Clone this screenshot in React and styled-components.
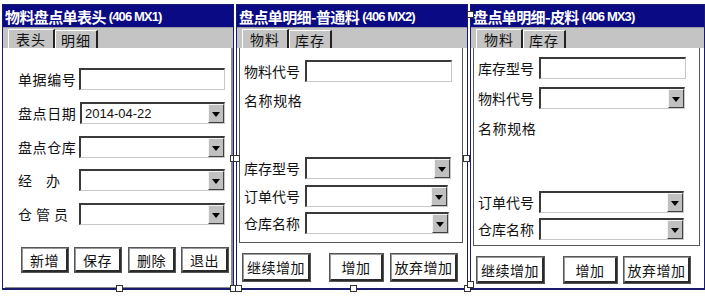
import React from 'react'
import styled, { createGlobalStyle } from 'styled-components'

const Global = createGlobalStyle`
  html, body { margin: 0; padding: 0; background: #fff; }
  body { font-family: "Noto Sans CJK SC", "Liberation Sans", sans-serif; }
`

const Page = styled.div`
  display: flex;
  align-items: flex-start;
  gap: 2px;
  padding: 4px 0 0 2px;
  width: 705px;
  height: 298px;
  box-sizing: border-box;
`

const Window = styled.div`
  position: relative;
  width: ${p => p.$w}px;
  height: 286px;
  box-sizing: border-box;
  display: flex;
  flex-direction: column;
  background: #fff;
  border: 1px solid #1b1b6e;
  border-bottom: 2px solid #1b1b6e;
`

const TitleBar = styled.div`
  height: 22px;
  flex: none;
  background: #0a0a84;
  color: #fff;
  display: flex;
  align-items: center;
  padding-left: 2px;
  white-space: nowrap;
  overflow: hidden;
`

const TitleCn = styled.span`
  font-family: "Noto Sans CJK SC", sans-serif;
  font-weight: 700;
  font-size: 15px;
  letter-spacing: -0.6px;
  line-height: 1;
`

const TitleCode = styled.span`
  font-family: "Liberation Sans", Arial, sans-serif;
  font-weight: 700;
  font-size: 13px;
  letter-spacing: -0.9px;
  margin-left: 3px;
  line-height: 1;
`

const TabStrip = styled.div`
  height: 21px;
  flex: none;
  background: #c4c4c4;
  display: flex;
  align-items: flex-end;
  padding-left: ${p => p.$pl}px;
  border-top: 1px solid #9a9a9a;
  box-sizing: border-box;
`

const Tab = styled.div`
  height: ${p => (p.$active ? 19 : 18)}px;
  width: ${p => p.$w}px;
  box-sizing: border-box;
  display: flex;
  align-items: center;
  justify-content: center;
  font-size: 14px;
  color: #111;
  background: #c4c4c4;
  border-left: 1px solid #fff;
  border-top: 1px solid #fff;
  border-right: 2px solid #222;
  letter-spacing: 1px;
`

const Sheet = styled.div`
  flex: 1;
  background: #fff;
  border-right: 2px solid #8a8a8a;
  border-bottom: 1px solid #8a8a8a;
  margin-left: 2px;
  display: flex;
  flex-direction: column;
  padding: 20px 0 0 13px;
`

const FormBox = styled.div`
  height: ${p => p.$h}px;
  flex: none;
  margin: 0 4px 0 2px;
  border: 1px solid #555;
  border-top: none;
  box-sizing: border-box;
  display: flex;
  flex-direction: column;
  padding: ${p => p.$pt}px 0 0 4px;
`

const Row = styled.div`
  display: flex;
  align-items: center;
  height: 22px;
  margin-top: ${p => p.$mt || 0}px;
`

const Label = styled.div`
  width: ${p => p.$w}px;
  flex: none;
  font-size: 14px;
  letter-spacing: ${p => p.$ls ?? 0.6}px;
  color: #111;
  white-space: pre;
  line-height: 22px;
`

const Field = styled.div`
  width: ${p => p.$w}px;
  height: 22px;
  box-sizing: border-box;
  display: flex;
  align-items: stretch;
  background: #fff;
  border-top: 2px solid #3a3a3a;
  border-left: 2px solid #3a3a3a;
  border-right: 1px solid #c8c8c8;
  border-bottom: 1px solid #c8c8c8;
`

const FieldText = styled.div`
  flex: 1;
  font-family: "Liberation Sans", Arial, sans-serif;
  font-size: 13px;
  color: #111;
  padding-left: 3px;
  line-height: 19px;
`

const DropBtn = styled.div`
  width: 16px;
  flex: none;
  background: #c0c0c0;
  border-left: 1px solid #f4f4f4;
  border-top: 1px solid #f4f4f4;
  border-right: 1px solid #404040;
  border-bottom: 1px solid #404040;
  box-sizing: border-box;
  display: flex;
  align-items: center;
  justify-content: center;
  &::after {
    content: '';
    border-left: 4px solid transparent;
    border-right: 4px solid transparent;
    border-top: 5px solid #000;
    margin-top: 1px;
  }
`

const PlainText = styled.div`
  font-size: 14px;
  letter-spacing: 0.6px;
  color: #111;
  height: 22px;
  line-height: 22px;
  margin-top: ${p => p.$mt || 0}px;
`

const ButtonRow = styled.div`
  display: flex;
  align-items: flex-start;
  padding-top: ${p => p.$pt}px;
  margin-left: ${p => p.$ml || 0}px;
`

const Button = styled.button`
  width: ${p => p.$w}px;
  height: ${p => p.$h || 24}px;
  margin-left: ${p => p.$ml || 0}px;
  padding: 0;
  font-family: "Noto Sans CJK SC", sans-serif;
  font-size: 14px;
  color: #111;
  background: #fff;
  box-sizing: border-box;
  border-top: 1px solid #9a9a9a;
  border-left: 1px solid #9a9a9a;
  border-right: 2px solid #2a2a2a;
  border-bottom: 2px solid #2a2a2a;
  box-shadow: inset 1px 1px 0 #fff, 0 0 0 1px #555;
  letter-spacing: 0.5px;
`

const Handle = styled.div`
  position: absolute;
  width: 5px;
  height: 5px;
  background: #fff;
  border: 1px solid #333;
  left: ${p => p.$x}px;
  top: ${p => p.$y}px;
`

function Input({ w }) {
  return <Field $w={w} />
}

function Select({ w, value }) {
  return (
    <Field $w={w}>
      <FieldText>{value}</FieldText>
      <DropBtn />
    </Field>
  )
}

function Title({ cn, code }) {
  return (
    <TitleBar>
      <TitleCn>{cn}</TitleCn>
      <TitleCode>{code}</TitleCode>
    </TitleBar>
  )
}

function Tabs({ pl, first, second }) {
  return (
    <TabStrip $pl={pl}>
      <Tab $active $w={47}>{first}</Tab>
      <Tab $w={43}>{second}</Tab>
    </TabStrip>
  )
}

export default function App() {
  return (
    <>
      <Global />
      <Page>
        <Window $w={232}>
          <Title cn="物料盘点单表头" code="(406 MX1)" />
          <Tabs pl={5} first="表头" second="明细" />
          <Sheet>
            <Row>
              <Label $w={61}>单据编号</Label>
              <Input w={146} />
            </Row>
            <Row $mt={12}>
              <Label $w={62}>盘点日期</Label>
              <Select w={145} value="2014-04-22" />
            </Row>
            <Row $mt={12}>
              <Label $w={61}>盘点仓库</Label>
              <Select w={146} />
            </Row>
            <Row $mt={11}>
              <Label $w={61} $ls={0}>{'经　办'}</Label>
              <Select w={146} />
            </Row>
            <Row $mt={12}>
              <Label $w={61} $ls={4}>仓管员</Label>
              <Select w={146} />
            </Row>
            <ButtonRow $pt={23} $ml={4}>
              <Button $w={46}>新增</Button>
              <Button $w={46} $ml={7}>保存</Button>
              <Button $w={46} $ml={8}>删除</Button>
              <Button $w={46} $ml={7}>退出</Button>
            </ButtonRow>
          </Sheet>
          <Handle $x={113} $y={280} />
          <Handle $x={227} $y={150} />
          <Handle $x={227} $y={280} />
        </Window>

        <Window $w={232}>
          <Title cn="盘点单明细-普通料" code="(406 MX2)" />
          <Tabs pl={5} first="物料" second="库存" />
          <FormBox $h={195} $pt={12}>
            <Row>
              <Label $w={61} $ls={0}>物料代号</Label>
              <Input w={147} />
            </Row>
            <PlainText $mt={7}>名称规格</PlainText>
            <Row $mt={46}>
              <Label $w={61} $ls={0}>库存型号</Label>
              <Select w={146} />
            </Row>
            <Row $mt={6}>
              <Label $w={61} $ls={0}>订单代号</Label>
              <Select w={143} />
            </Row>
            <Row $mt={5}>
              <Label $w={61} $ls={0}>仓库名称</Label>
              <Select w={144} />
            </Row>
          </FormBox>
          <ButtonRow $pt={11} $ml={6}>
            <Button $w={67} $h={27}>继续增加</Button>
            <Button $w={53} $h={27} $ml={20}>增加</Button>
            <Button $w={66} $h={27} $ml={8}>放弃增加</Button>
          </ButtonRow>
          <Handle $x={-4} $y={150} />
          <Handle $x={226} $y={150} />
          <Handle $x={-2} $y={280} />
          <Handle $x={113} $y={280} />
          <Handle $x={227} $y={280} />
        </Window>

        <Window $w={235}>
          <Title cn="盘点单明细-皮料" code="(406 MX3)" />
          <Tabs pl={5} first="物料" second="库存" />
          <FormBox $h={198} $pt={9}>
            <Row>
              <Label $w={61} $ls={0}>库存型号</Label>
              <Input w={147} />
            </Row>
            <Row $mt={8}>
              <Label $w={61} $ls={0}>物料代号</Label>
              <Select w={146} />
            </Row>
            <PlainText $mt={8}>名称规格</PlainText>
            <Row $mt={52}>
              <Label $w={61} $ls={0}>订单代号</Label>
              <Select w={145} />
            </Row>
            <Row $mt={5}>
              <Label $w={61} $ls={0}>仓库名称</Label>
              <Select w={145} />
            </Row>
          </FormBox>
          <ButtonRow $pt={11} $ml={6}>
            <Button $w={67} $h={26}>继续增加</Button>
            <Button $w={53} $h={26} $ml={20}>增加</Button>
            <Button $w={66} $h={26} $ml={7}>放弃增加</Button>
          </ButtonRow>
          <Handle $x={-4} $y={6} />
          <Handle $x={-4} $y={276} />
        </Window>
      </Page>
    </>
  )
}
